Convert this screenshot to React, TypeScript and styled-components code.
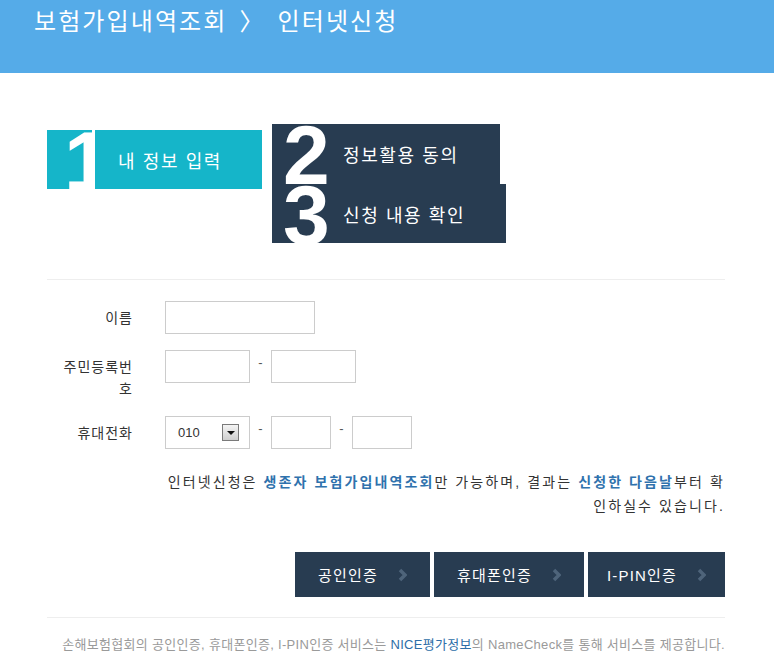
import React from 'react';
import styled, { createGlobalStyle } from 'styled-components';

const GlobalStyle = createGlobalStyle`
  html, body {
    margin: 0;
    padding: 0;
    background: #ffffff;
  }
  body {
    font-family: 'Liberation Sans', 'Noto Sans CJK KR', sans-serif;
    color: #333333;
  }
  * {
    box-sizing: border-box;
  }
`;

const KR = `'Liberation Sans', 'Noto Sans CJK KR', sans-serif`;

const Header = styled.header`
  height: 73px;
  background-color: #55abe8;
  padding: 7px 0 0 34px;
`;

const Title = styled.h1`
  margin: 0;
  font-family: ${KR};
  font-weight: 400;
  font-size: 24px;
  line-height: 30px;
  color: #ffffff;
  letter-spacing: 2.1px;
`;

const Arrow = styled.span`
  margin: 0 12px 0 12px;
`;

const Main = styled.main`
  width: 678px;
  margin-left: 47px;
`;

const Steps = styled.div`
  display: flex;
  align-items: flex-start;
  padding-top: 51px;
`;

const StepColumn = styled.div`
  display: flex;
  flex-direction: column;
  align-items: flex-start;
  margin-left: 10px;
`;

const FirstStep = styled.div`
  display: flex;
  margin-top: 6px;
  height: 59px;
`;

const NumBox = styled.div`
  position: relative;
  width: 45px;
  height: 59px;
  background-color: #15b5c9;
  overflow: hidden;
`;

const StepLabel = styled.div<{ $width: number; $height: number; $dark?: boolean }>`
  position: relative;
  width: ${(p) => p.$width}px;
  height: ${(p) => p.$height}px;
  background-color: ${(p) => (p.$dark ? '#283c51' : '#15b5c9')};
  margin-left: ${(p) => (p.$dark ? 0 : 3)}px;
  padding-left: ${(p) => (p.$dark ? 71 : 23)}px;
  display: flex;
  align-items: center;
  font-family: ${KR};
  font-size: 18px;
  color: #ffffff;
  letter-spacing: 1.6px;
  overflow: ${(p) => (p.$dark ? 'visible' : 'hidden')};
`;

const LastStep = styled(StepLabel)`
  overflow: hidden;
`;

const Digit = styled.span<{ $left: number }>`
  position: absolute;
  z-index: 1;
  left: ${(p) => p.$left}px;
  top: -11px;
  font-family: 'Liberation Sans', Arial, sans-serif;
  font-weight: 700;
  font-size: 84px;
  line-height: 1;
  letter-spacing: 0;
  color: #ffffff;
`;

const Divider = styled.hr<{ $top: number }>`
  margin: ${(p) => p.$top}px 0 0;
  border: 0;
  border-top: 1px solid #eeeeee;
  height: 0;
`;

const Form = styled.form`
  padding: 21px 0 0 13px;
`;

const Row = styled.div`
  display: flex;
  align-items: flex-start;
  margin-bottom: 16px;
`;

const Label = styled.label`
  width: 73px;
  margin-right: 32px;
  padding-top: 6px;
  text-align: right;
  font-family: ${KR};
  font-size: 14px;
  line-height: 22px;
  letter-spacing: 1px;
  color: #333333;
  word-break: break-all;
`;

const Input = styled.input<{ $width: number }>`
  width: ${(p) => p.$width}px;
  height: 33px;
  border: 1px solid #cccccc;
  background: #ffffff;
  padding: 0 8px;
  outline: none;
  font-family: ${KR};
  font-size: 13px;
`;

const Dash = styled.span`
  width: 21px;
  text-align: center;
  padding-top: 5px;
  font-family: ${KR};
  font-size: 13px;
  color: #555555;
`;

const Select = styled.div`
  width: 85px;
  height: 33px;
  border: 1px solid #cccccc;
  display: flex;
  align-items: center;
  justify-content: space-between;
  padding: 0 10px 0 12px;
  font-family: 'Liberation Sans', Arial, sans-serif;
  font-size: 13px;
  color: #333333;
`;

const SelectButton = styled.span`
  width: 17px;
  height: 17px;
  border: 1px solid #7a7a7a;
  background: linear-gradient(#f4f4f4, #cfcfcf);
  display: flex;
  align-items: center;
  justify-content: center;
  &::after {
    content: '';
    border-left: 4px solid transparent;
    border-right: 4px solid transparent;
    border-top: 4px solid #111111;
  }
`;

const Notice = styled.p`
  margin: 21px 0 0;
  text-align: right;
  font-family: ${KR};
  font-size: 14px;
  line-height: 24px;
  letter-spacing: 2.1px;
  color: #333333;
`;

const Strong = styled.strong`
  color: #2f72ad;
  font-weight: 700;
`;

const Buttons = styled.div`
  display: flex;
  justify-content: flex-end;
  gap: 4px;
  margin-top: 34px;
`;

const AuthButton = styled.button<{ $width: number }>`
  width: ${(p) => p.$width}px;
  height: 45px;
  border: 0;
  background-color: #283c51;
  color: #ffffff;
  display: flex;
  align-items: center;
  justify-content: center;
  gap: 20px;
  font-family: ${KR};
  font-size: 15px;
  letter-spacing: 1.2px;
  cursor: pointer;
`;

const Footer = styled.p`
  margin: 16px 0 0;
  text-align: right;
  font-family: ${KR};
  font-size: 13px;
  letter-spacing: 0.3px;
  color: #9a9a9a;
`;

const FooterLink = styled.span`
  color: #2d6ea8;
`;

const Chevron = () => (
  <svg width="9" height="14" viewBox="0 0 9 14">
    <polyline points="2,2 7,7 2,12" fill="none" stroke="#4e647a" strokeWidth="3.5" />
  </svg>
);

const App = () => {
  return (
    <>
      <GlobalStyle />
      <Header>
        <Title>
          보험가입내역조회<Arrow>〉</Arrow>인터넷신청
        </Title>
      </Header>
      <Main>
        <Steps>
          <FirstStep>
            <NumBox>
              <Digit $left={17}>1</Digit>
            </NumBox>
            <StepLabel $width={167} $height={59}>
              내 정보 입력
            </StepLabel>
          </FirstStep>
          <StepColumn>
            <StepLabel $dark $width={228} $height={60}>
              <Digit $left={11}>2</Digit>
              정보활용 동의
            </StepLabel>
            <LastStep $dark $width={234} $height={59}>
              <Digit $left={11}>3</Digit>
              신청 내용 확인
            </LastStep>
          </StepColumn>
        </Steps>

        <Divider $top={36} />

        <Form>
          <Row>
            <Label>이름</Label>
            <Input $width={150} />
          </Row>
          <Row>
            <Label>주민등록번호</Label>
            <Input $width={85} />
            <Dash>-</Dash>
            <Input $width={85} />
          </Row>
          <Row>
            <Label>휴대전화</Label>
            <Select>
              010
              <SelectButton />
            </Select>
            <Dash>-</Dash>
            <Input $width={60} />
            <Dash>-</Dash>
            <Input $width={60} />
          </Row>
        </Form>

        <Notice>
          인터넷신청은 <Strong>생존자 보험가입내역조회</Strong>만 가능하며, 결과는{' '}
          <Strong>신청한 다음날</Strong>부터 확
          <br />
          인하실수 있습니다.
        </Notice>

        <Buttons>
          <AuthButton $width={135}>
            공인인증
            <Chevron />
          </AuthButton>
          <AuthButton $width={150}>
            휴대폰인증
            <Chevron />
          </AuthButton>
          <AuthButton $width={137}>
            I-PIN인증
            <Chevron />
          </AuthButton>
        </Buttons>

        <Divider $top={20} />

        <Footer>
          손해보험협회의 공인인증, 휴대폰인증, I-PIN인증 서비스는 <FooterLink>NICE평가정보</FooterLink>의
          NameCheck를 통해 서비스를 제공합니다.
        </Footer>
      </Main>
    </>
  );
};

export default App;
